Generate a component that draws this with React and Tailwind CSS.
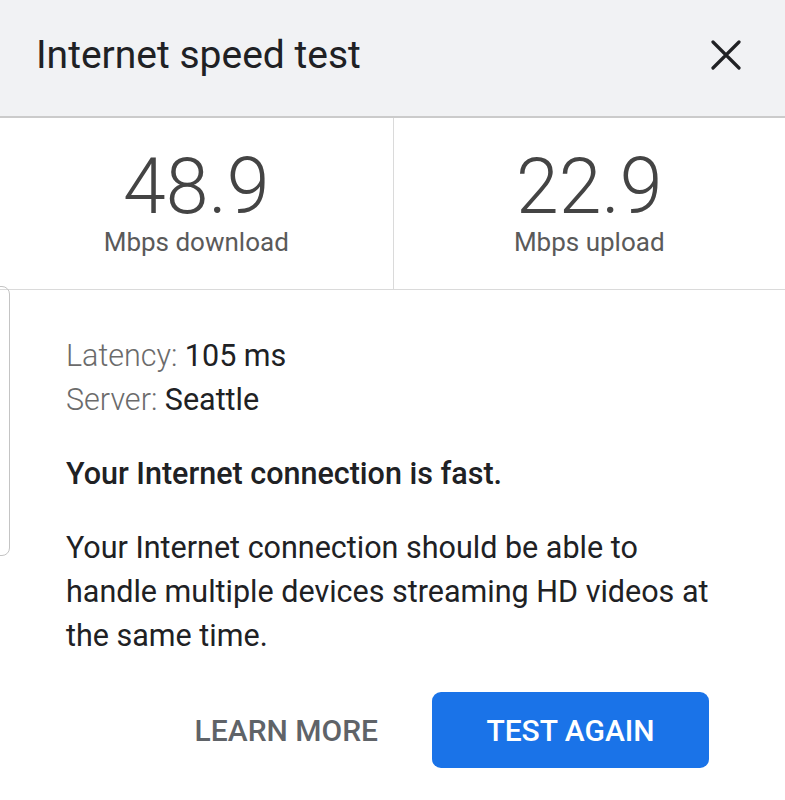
export default function App() {
  return (
    <div className="relative h-[800px] w-[785px] overflow-hidden bg-white font-['Roboto',sans-serif]">
      {/* header */}
      <div className="flex h-[118px] items-center justify-between border-b-2 border-[#cbcbcb] bg-[#f1f2f4] pb-[6px] pl-[36px] pr-[44px]">
        <h1 className="text-[39px] font-normal text-[#202124]">Internet speed test</h1>
        <svg width="30" height="30" viewBox="0 0 30 30" className="text-[#202124]">
          <path d="M2 2 L28 28 M28 2 L2 28" stroke="currentColor" strokeWidth="3.2" strokeLinecap="round" />
        </svg>
      </div>

      {/* results */}
      <div className="grid h-[172px] grid-cols-2 border-b border-[#dadada]">
        <Stat value="48.9" label="Mbps download" />
        <div className="border-l border-[#dadada]">
          <Stat value="22.9" label="Mbps upload" />
        </div>
      </div>

      {/* peeking card edge */}
      <div className="absolute left-[-12px] top-[286px] h-[270px] w-[22px] rounded-[8px] border border-[#c4c4c4]" />

      {/* details */}
      <div className="pl-[66px] pr-[50px] pt-[44px] text-[30.5px] text-[#202124]">
        <p className="leading-[44px]">
          <span className="font-light text-[#6b6b6b]">Latency: </span>105 ms
        </p>
        <p className="leading-[44px]">
          <span className="font-light text-[#6b6b6b]">Server: </span>Seattle
        </p>
        <p className="mt-[30px] font-medium leading-[44px]">Your Internet connection is fast.</p>
        <p className="mt-[30px] leading-[44px]">
          Your Internet connection should be able to handle multiple devices streaming HD videos at the same time.
        </p>
      </div>

      {/* actions */}
      <div className="mt-[34px] flex items-center justify-end gap-[54px] pr-[76px]">
        <button className="text-[30px] font-medium text-[#5f6368]">LEARN MORE</button>
        <button className="h-[76px] w-[277px] rounded-[9px] bg-[#1a73e8] text-[30px] font-medium text-white">
          TEST AGAIN
        </button>
      </div>
    </div>
  )
}

function Stat({ value, label }) {
  return (
    <div className="flex flex-col items-center pt-[30px]">
      <div className="text-[77px] font-light leading-[78px] text-[#444444]">{value}</div>
      <div className="text-[26px] leading-[32px] text-[#5a5a5a]">{label}</div>
    </div>
  )
}
